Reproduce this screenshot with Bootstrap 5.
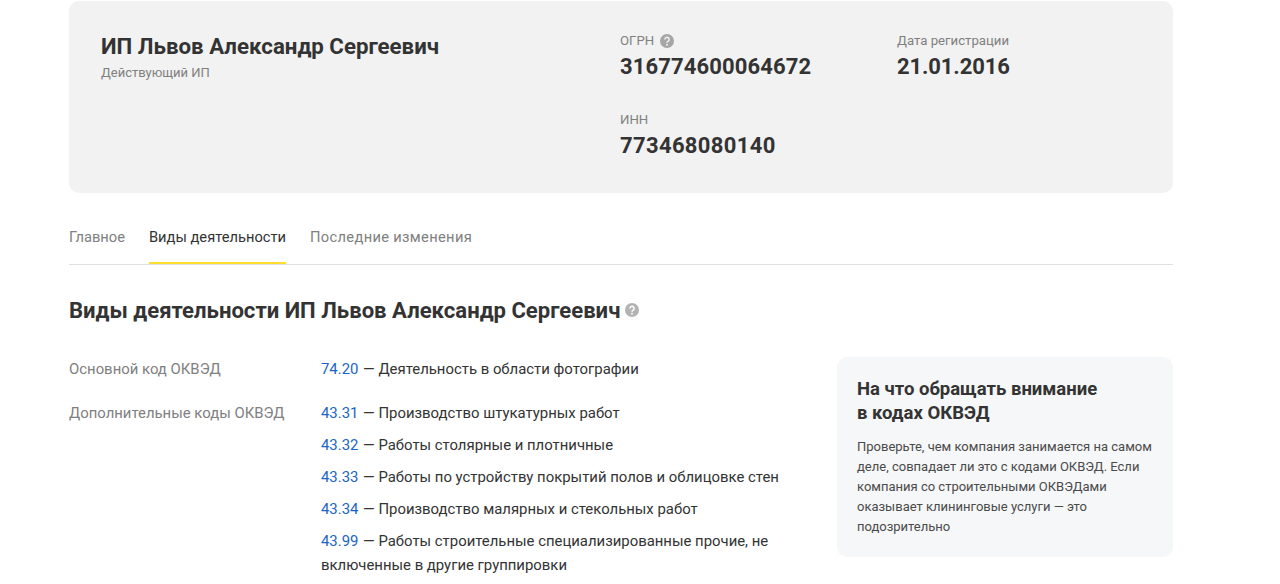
<!DOCTYPE html>
<html lang="ru">
<head>
<meta charset="utf-8">
<title>ИП Львов Александр Сергеевич</title>
<link rel="stylesheet" href="https://cdn.jsdelivr.net/npm/bootstrap@5.3.0/dist/css/bootstrap.min.css">
<style>
html,body{height:584px;overflow:hidden;background:#fff}
body{font-family:Roboto,"Noto Sans",sans-serif;color:#333;font-size:14.9px;line-height:24px}
.page-wrap{width:1104px;margin-left:69px;padding-top:1px}
.hero-box{background:#f2f2f2;border-radius:10px;height:192px;padding:30px 32px}
.hero-left{width:519px}
.hero-title{font-size:22.25px;line-height:32px;font-weight:700;color:#333;margin:-1px 0 0}
.hero-sub{font-size:13px;line-height:16px;color:#808080;margin-top:3px}
.fact-a{width:277px}
.fact-label{font-size:13.2px;line-height:18px;color:#808080;height:18px;margin-top:1px;display:flex;align-items:center;gap:6px}
.fact-value{font-size:22px;line-height:32px;font-weight:700;color:#333;margin-top:1px}
.val-ogrn{letter-spacing:.13px}
.val-inn{letter-spacing:.35px}
.val-date{letter-spacing:-.1px}
.fact-row{height:79px}
.tabs-bar{height:72px;border-bottom:1px solid #e0e0e0;gap:24px}
.tab-item{height:71px;line-height:88px;color:#808080;font-size:14.7px;display:block;text-decoration:none;box-sizing:content-box}
.tab-item.is-on{color:#333;border-bottom:2px solid #ffdd2d;height:69px}
.tab-long{letter-spacing:.32px}
.sect-title{font-size:22.1px;line-height:28px;font-weight:700;color:#333;margin:31px 0 0;display:flex;align-items:center;gap:5px}
.okved-body{margin-top:33px}
.okved-left{width:768px}
.okved-label{width:252px;color:#808080;flex:none}
.okved-list{width:460px}
.okved-list a{color:#1a64c4;text-decoration:none;margin-right:1px}
.okved-row{margin-bottom:8px}
.main-row{margin-bottom:20px}
.side-note{width:336px;height:200px;background:#f6f7f8;border-radius:10px;padding:20px}
.side-title{font-size:18.5px;line-height:24px;font-weight:700;color:#333;margin:0 0 12px}
.side-text{font-size:13px;line-height:20px;color:#4a4a4a;margin:0}
</style>
</head>
<body>
<div class="page-wrap">
  <section class="hero-box d-flex">
    <div class="hero-left">
      <h1 class="hero-title">ИП Львов Александр Сергеевич</h1>
      <div class="hero-sub">Действующий ИП</div>
    </div>
    <div>
      <div class="d-flex fact-row">
        <div class="fact-a">
          <div class="fact-label">ОГРН
            <svg width="14" height="14" viewBox="0 0 14 14"><circle cx="7" cy="7" r="7" fill="#a6a6a6"/><path d="M4.9 5.4a2.1 2.1 0 1 1 3.3 1.7c-.8.5-1.2.9-1.2 1.6" fill="none" stroke="#f2f2f2" stroke-width="1.5"/><circle cx="7" cy="10.7" r=".95" fill="#f2f2f2"/></svg>
          </div>
          <div class="fact-value val-ogrn">316774600064672</div>
        </div>
        <div>
          <div class="fact-label">Дата регистрации</div>
          <div class="fact-value val-date">21.01.2016</div>
        </div>
      </div>
      <div>
        <div class="fact-label">ИНН</div>
        <div class="fact-value val-inn">773468080140</div>
      </div>
    </div>
  </section>

  <nav class="tabs-bar d-flex">
    <a class="tab-item" href="#">Главное</a>
    <a class="tab-item is-on" href="#">Виды деятельности</a>
    <a class="tab-item tab-long" href="#">Последние изменения</a>
  </nav>

  <h2 class="sect-title">Виды деятельности ИП Львов Александр Сергеевич
    <svg width="14" height="14" viewBox="0 0 14 14"><circle cx="7" cy="7" r="7" fill="#b3b3b3"/><path d="M4.9 5.4a2.1 2.1 0 1 1 3.3 1.7c-.8.5-1.2.9-1.2 1.6" fill="none" stroke="#fff" stroke-width="1.5"/><circle cx="7" cy="10.7" r=".95" fill="#fff"/></svg>
  </h2>

  <div class="d-flex okved-body">
    <div class="okved-left">
      <div class="d-flex main-row">
        <div class="okved-label">Основной код ОКВЭД</div>
        <div class="okved-list"><a href="#">74.20</a> — Деятельность в области фотографии</div>
      </div>
      <div class="d-flex">
        <div class="okved-label">Дополнительные коды ОКВЭД</div>
        <div class="okved-list">
          <div class="okved-row"><a href="#">43.31</a> — Производство штукатурных работ</div>
          <div class="okved-row"><a href="#">43.32</a> — Работы столярные и плотничные</div>
          <div class="okved-row"><a href="#">43.33</a> — Работы по устройству покрытий полов и облицовке стен</div>
          <div class="okved-row"><a href="#">43.34</a> — Производство малярных и стекольных работ</div>
          <div class="okved-row"><a href="#">43.99</a> — Работы строительные специализированные прочие, не включенные в другие группировки</div>
        </div>
      </div>
    </div>
    <aside class="side-note">
      <h3 class="side-title">На что обращать внимание<br>в кодах ОКВЭД</h3>
      <p class="side-text">Проверьте, чем компания занимается на самом деле, совпадает ли это с кодами ОКВЭД. Если компания со строительными ОКВЭДами оказывает клининговые услуги — это подозрительно</p>
    </aside>
  </div>
</div>
</body>
</html>
